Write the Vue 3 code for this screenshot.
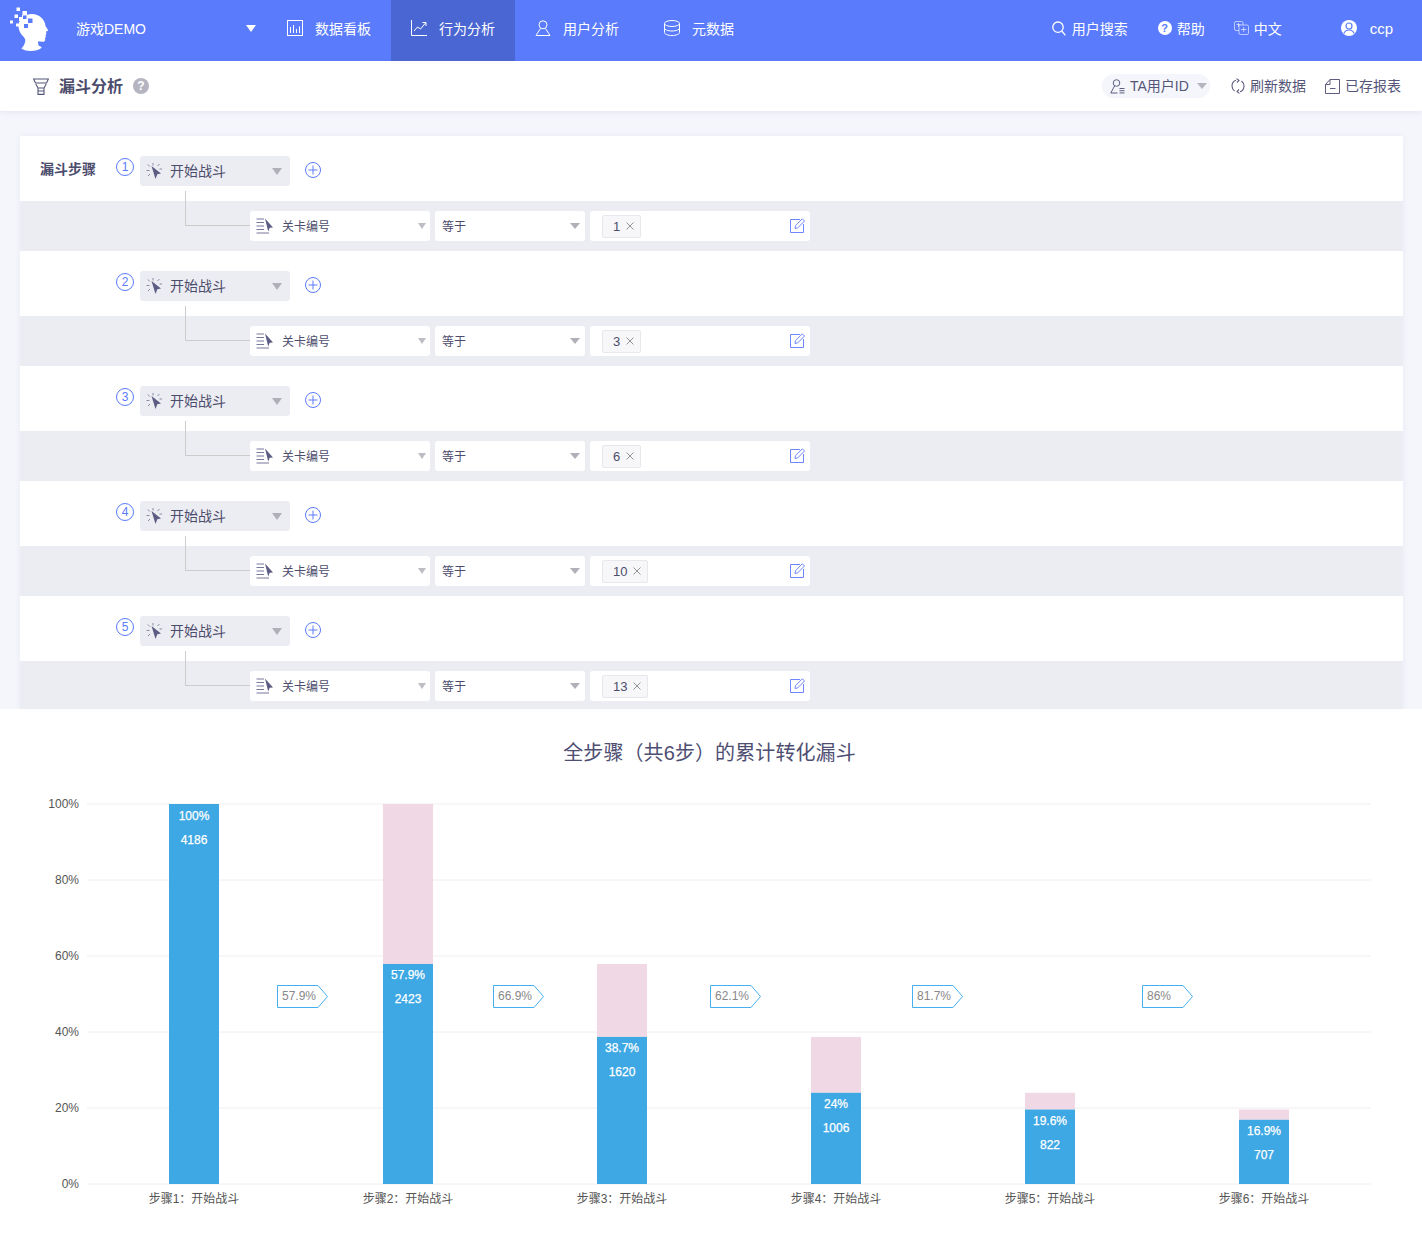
<script setup>
const levels = ['1', '3', '6', '10', '13']
const navItems = [
  { key: 'board', label: '数据看板' },
  { key: 'behavior', label: '行为分析', active: true },
  { key: 'user', label: '用户分析' },
  { key: 'meta', label: '元数据', shifted: true }
]
const ticks = [100, 80, 60, 40, 20, 0]
const top = 767
const Y = (p) => 804 - top + (100 - p) * 3.8
const bars = [
  { cx: 194, upper: 100, value: 100, pct: '100%', count: '4186' },
  { cx: 408, upper: 100, value: 57.9, pct: '57.9%', count: '2423' },
  { cx: 622, upper: 57.9, value: 38.7, pct: '38.7%', count: '1620' },
  { cx: 836, upper: 38.7, value: 24, pct: '24%', count: '1006' },
  { cx: 1050, upper: 24, value: 19.6, pct: '19.6%', count: '822' },
  { cx: 1264, upper: 19.6, value: 16.9, pct: '16.9%', count: '707' }
]
const tags = [
  { x: 277, label: '57.9%' },
  { x: 493, label: '66.9%' },
  { x: 710, label: '62.1%' },
  { x: 912, label: '81.7%' },
  { x: 1142, label: '86%' }
]
const tagY = 985 - top
const tagPoints = (x) =>
  `${x + 0.5},${tagY + 0.5} ${x + 41},${tagY + 0.5} ${x + 50.5},${tagY + 11.5} ${x + 41},${tagY + 22.5} ${x + 0.5},${tagY + 22.5}`
</script>

<template>
  <div class="page">
    <header class="nav">
      <div class="logo">
        <svg width="76" height="61" viewBox="0 0 76 61">
          <path fill="#fff" d="M32 14c7 0 13 5 13.500 12l2.500 4c.3.8-.6 1.300-2 1.500l.4 2.500-.9 1 .5 1.700-.9 1 .1 2.300c-.3 1.500-1.700 2-3.200 1.800l-4-.5.500 4.200c1.700.8 3 1.400 3.300 2.200-3 2.300-7 3.300-11 3.300-4 0-7-.8-9.500-2.500 2-2 3.500-4.500 4-7.500.1-2-.8-3.300-2.500-5-2.500-2.500-4.300-6-4.300-10C18.500 20 24 14 32 14z"/>
          <g fill="#fff">
            <rect x="16.500" y="7.500" width="3.500" height="3.500"/>
            <rect x="14.500" y="14.500" width="3.500" height="3.500"/>
            <rect x="10" y="20.500" width="3" height="3"/>
            <rect x="16" y="23.500" width="3" height="3"/>
          </g>
          <g fill="#5a7bfb">
            <rect x="22.500" y="11" width="4.500" height="4.500" fill="#fff"/>
            <rect x="19" y="17" width="4" height="4" fill="#fff"/>
            <rect x="28" y="18.500" width="4.500" height="4.500"/>
            <rect x="24" y="24" width="4" height="4"/>
            <rect x="22" y="15" width="3" height="3" fill="#fff"/>
            <rect x="20" y="21" width="4" height="4" fill="#fff"/>
            <rect x="23" y="15.500" width="3.500" height="3.500"/>
          </g>
        </svg>
      </div>
      <div class="brand">
        <span>游戏DEMO</span>
        <i class="caret caret-white"></i>
      </div>
      <a v-for="item in navItems" :key="item.key" class="nav-item" :class="{ active: item.active, shifted: item.shifted }">
        <svg class="nav-icon" viewBox="0 0 16 16" fill="none" stroke="#fff" stroke-width="1">
          <template v-if="item.key === 'board'">
            <rect x=".5" y=".5" width="15" height="15"/>
            <path d="M3.500 7v6M6.500 5v8M9.500 9v4M12.500 6.500V13"/>
          </template>
          <template v-else-if="item.key === 'behavior'">
            <path d="M.5 0v15.500H16"/>
            <path d="M3 11l3.500-4 3 2L14.500 3M11.500 2.500h3.500V6"/>
          </template>
          <template v-else-if="item.key === 'user'">
            <circle cx="8" cy="4.800" r="4"/>
            <path d="M5.500 8.500L1 15.500h14l-4.500-7"/>
          </template>
          <template v-else>
            <ellipse cx="8" cy="3.500" rx="7.500" ry="3"/>
            <path d="M.5 3.500v9c0 1.700 3.400 3 7.500 3s7.500-1.300 7.500-3v-9M.5 8c0 1.700 3.400 3 7.500 3s7.500-1.300 7.500-3"/>
          </template>
        </svg>
        <span>{{ item.label }}</span>
      </a>
      <div class="nav-right">
        <span class="tool tool-search">
          <svg width="14" height="15" viewBox="0 0 14 15" fill="none" stroke="#fff" stroke-width="1.300"><circle cx="6" cy="6.200" r="5.200"/><path d="M9.800 10l3.600 4.300"/></svg>
          <span>用户搜索</span>
        </span>
        <span class="tool tool-help">
          <span class="help-dot">?</span>
          <span>帮助</span>
        </span>
        <span class="tool tool-lang">
          <svg width="15" height="14" viewBox="0 0 15 14" fill="none" stroke="#fff" stroke-opacity=".6" stroke-width="1"><rect x=".5" y=".5" width="8.500" height="9" rx="1.500"/><rect x="5" y="4" width="9.500" height="9.500" rx="1.500" fill="#5a7bfb"/><path d="M7 8.500h5.500M9.700 6v5"/><path d="M2.500 3.500h4M4.500 2v4"/></svg>
          <span>中文</span>
        </span>
        <span class="tool tool-user">
          <svg width="16" height="16" viewBox="0 0 16 16"><circle cx="8" cy="8" r="8" fill="#fff"/><circle cx="8" cy="6" r="3" fill="none" stroke="#5a7bfb" stroke-width="1.200"/><path d="M2.800 13.500c1-2.500 3-3.500 5.200-3.500s4.200 1 5.200 3.500" fill="none" stroke="#5a7bfb" stroke-width="1.200"/></svg>
          <span class="user-name">ccp</span>
        </span>
      </div>
    </header>

    <div class="subhead">
      <svg class="funnel" width="16" height="17" viewBox="0 0 16 17" fill="none" stroke="#55557a" stroke-width="1.100">
        <path d="M.6 1h14.800L13.500 5h-11zM2.800 6l2.200 4h6l2.200-4M5 10v6.400h6V10M5 13h6"/>
      </svg>
      <h1 class="title">漏斗分析</h1>
      <span class="q-dot">?</span>
      <div class="sub-right">
        <span class="pill">
          <svg width="15" height="15" viewBox="0 0 15 15" fill="none" stroke="#5c5c7e" stroke-width="1"><circle cx="6.500" cy="4" r="3.300"/><path d="M4.500 7L.8 14h6.700M9.500 9.500h5M9.500 11.700h5M9.500 13.900h5"/></svg>
          <span class="lift">TA用户ID</span>
          <i class="caret caret-soft"></i>
        </span>
        <span class="action action-refresh">
          <svg width="14" height="16" viewBox="0 0 14 16" fill="none" stroke="#5c5c7e" stroke-width="1.100"><path d="M5 2.200C2.600 3 1 5.200 1 8c0 2 1 3.800 2.600 5M9 13.800c2.400-.8 4-3 4-5.800 0-2-1-3.800-2.600-5"/><path d="M5.500 .6L8 2.400 6 4.500M8.500 15.400L6 13.600l2-2.100"/></svg>
          <span class="lift">刷新数据</span>
        </span>
        <span class="action">
          <svg width="15" height="15" viewBox="0 0 15 15" fill="none" stroke="#5c5c7e" stroke-width="1"><path d="M.5 14.500V5.500L5 .5h9.500v14zM.5 5.500H5V.5M5 9.500h5.500"/></svg>
          <span class="lift">已存报表</span>
        </span>
      </div>
    </div>

    <main class="main">
      <section class="card">
        <div v-for="(level, i) in levels" :key="i" class="step">
          <div class="step-row">
            <span class="step-label">{{ i === 0 ? '漏斗步骤' : '' }}</span>
            <span class="step-num">{{ i + 1 }}</span>
            <div class="select event-select">
              <svg width="17" height="17" viewBox="0 0 17 17" fill="none" stroke="#8a8aa6" stroke-width="1">
                <path d="M7 0v2.500M1.800 1.500L3.800 3.500M.5 7.500h3M2 13l2-2M13.500 1l-2 2M16 6h-2.500"/>
                <path d="M5.500 3L15 10.500l-3.700.7L9.500 16z" fill="#5c5c84" stroke="none"/>
              </svg>
              <span class="event-text lift">开始战斗</span>
              <i class="caret caret-big"></i>
            </div>
            <svg class="plus" width="16" height="16" viewBox="0 0 16 16" fill="none" stroke="#5a7bfb" stroke-width="1"><circle cx="8" cy="8" r="7.500"/><path d="M3.500 8h9M8 3.500v9"/></svg>
          </div>
          <div class="filter-row">
            <div class="select field">
              <svg width="17" height="17" viewBox="0 0 17 17" fill="none" stroke="#77779a" stroke-width="1">
                <path d="M.5 1h7.500M.5 4.500h7.500M.5 8h7.500M.5 11.500h7.500M.5 15h12.500"/>
                <path d="M9 .5L17 9.500l-3.300.3-1.500 3.700z" fill="#5c5c84" stroke="none"/>
              </svg>
              <span class="field-text lift">关卡编号</span>
              <i class="caret caret-small"></i>
            </div>
            <div class="select op">
              <span class="op-text lift">等于</span>
              <i class="caret caret-op"></i>
            </div>
            <div class="select value">
              <span class="tag">
                <span>{{ level }}</span>
                <svg width="8" height="8" viewBox="0 0 8 8" fill="none" stroke="#888" stroke-width=".9"><path d="M.5.500l7 7M7.500.500l-7 7"/></svg>
              </span>
              <svg class="edit" width="15" height="15" viewBox="0 0 15 15" fill="none" stroke="#6f86ff" stroke-width="1"><path d="M10 1.500H.5v13h13V6"/><path d="M5 10.500l.5-2.800L12.300.8l2.200 2.200-6.800 6.900z"/></svg>
            </div>
          </div>
          <span class="connector"></span>
        </div>
      </section>
    </main>

    <section class="chart">
      <h2 class="chart-title">全步骤（共6步）的累计转化漏斗</h2>
      <svg class="plot" width="1422" height="475" viewBox="0 0 1422 475">
        <g v-for="t in ticks" :key="t">
          <line x1="87" x2="1371" :y1="Y(t)" :y2="Y(t)" stroke="#eeeeee" stroke-width="1"/>
          <text class="axis" x="79" :y="Y(t) + 4.300" text-anchor="end">{{ t }}%</text>
        </g>
        <g v-for="(b, i) in bars" :key="i">
          <rect v-if="b.upper > b.value" :x="b.cx - 25" :y="Y(b.upper)" width="50" :height="(b.upper - b.value) * 3.800" fill="#f0d8e4"/>
          <rect :x="b.cx - 25" :y="Y(b.value)" width="50" :height="b.value * 3.800" fill="#3ea8e4"/>
          <text class="bar-text" :x="b.cx" :y="Y(b.value) + 15.500" text-anchor="middle">{{ b.pct }}</text>
          <text class="bar-text" :x="b.cx" :y="Y(b.value) + 39.500" text-anchor="middle">{{ b.count }}</text>
          <text class="step-name" :x="b.cx" y="435.500" text-anchor="middle">步骤{{ i + 1 }}：开始战斗</text>
        </g>
        <g v-for="t in tags" :key="t.x">
          <polygon :points="tagPoints(t.x)" fill="#fff" stroke="#45b0f0" stroke-width="1"/>
          <text class="tag-text" :x="t.x + 5" :y="tagY + 15">{{ t.label }}</text>
        </g>
      </svg>
    </section>
  </div>
</template>

<style>
html, body { margin: 0; padding: 0; background: #fff; }
</style>

<style scoped>
.page {
  width: 1422px;
  height: 1242px;
  overflow: hidden;
  font-family: "Liberation Sans", "Noto Sans CJK SC", sans-serif;
  color: #4c4c6c;
  background: #fff;
}
.nav {
  height: 61px;
  display: flex;
  align-items: stretch;
  background: #5a7bfb;
  color: #fff;
  font-size: 14px;
}
.logo { width: 76px; flex: none; }
.logo svg { display: block; }
.brand {
  width: 191px;
  flex: none;
  box-sizing: border-box;
  padding: 0 11px 5px 0;
  display: flex;
  align-items: center;
  justify-content: space-between;
}
.caret {
  display: block;
  width: 0;
  height: 0;
  border-style: solid;
  border-color: transparent;
  border-bottom-width: 0;
}
.caret-white { border-width: 7px 5.500px 0; border-top-color: #fff; }
.caret-soft { border-width: 6px 5px 0; border-top-color: #b5b5c0; margin-left: 8px; }
.caret-big { border-width: 7px 5px 0; border-top-color: #b0b0b8; margin-left: auto; }
.caret-small { border-width: 6px 4.500px 0; border-top-color: #bdbdc4; margin-left: auto; }
.caret-op { border-width: 6px 5px 0; border-top-color: #b0b0b8; margin-left: auto; }
.lift { margin-top: -2px; }
.nav-item {
  box-sizing: border-box;
  display: flex;
  align-items: center;
  gap: 12px;
  padding: 0 20px 5px;
}
.nav-item.active { background: #4a66d2; }
.nav-item.shifted { margin-left: 5px; }
.nav-icon { width: 16px; height: 16px; flex: none; }
.nav-right {
  margin-left: auto;
  padding: 0 29px 5px 0;
  display: flex;
  align-items: center;
}
.tool { display: flex; align-items: center; gap: 5px; }
.tool-search { gap: 6px; }
.tool-help { margin-left: 30px; }
.tool-lang { margin-left: 29px; }
.tool-user { margin-left: 59px; gap: 13px; }
.help-dot {
  width: 14px;
  height: 14px;
  border-radius: 50%;
  background: #fff;
  color: #5a7bfb;
  font-size: 11px;
  font-weight: 700;
  line-height: 14px;
  text-align: center;
}
.user-name { font-size: 15px; }
.subhead {
  position: relative;
  height: 50px;
  box-sizing: border-box;
  padding-left: 33px;
  display: flex;
  align-items: center;
  background: #fff;
  box-shadow: 0 1px 5px rgba(90, 100, 160, .12);
}
.funnel { flex: none; }
.title {
  margin: -2px 0 0 10px;
  font-size: 16px;
  font-weight: 700;
  color: #4c4c6c;
}
.q-dot {
  margin-left: 10px;
  width: 16px;
  height: 16px;
  border-radius: 50%;
  background: #b5b5c2;
  color: #fff;
  font-size: 12px;
  font-weight: 700;
  line-height: 16px;
  text-align: center;
}
.sub-right {
  margin-left: auto;
  padding-right: 21px;
  display: flex;
  align-items: center;
  font-size: 14px;
  color: #55557a;
}
.pill {
  width: 108px;
  height: 24px;
  box-sizing: border-box;
  padding-left: 8px;
  display: flex;
  align-items: center;
  gap: 5px;
  border-radius: 12px;
  background: #f5f6fb;
}
.pill .caret { margin-left: 3px; }
.action { display: flex; align-items: center; gap: 5px; margin-left: 19px; }
.action-refresh { margin-left: 21px; }
.main {
  height: 598px;
  box-sizing: border-box;
  padding: 25px 19px 0 20px;
  background: #f5f6fb;
}
.card {
  height: 573px;
  overflow: hidden;
  background: #fff;
  box-shadow: 0 0 6px rgba(90, 100, 160, .08);
}
.step { position: relative; height: 115px; }
.step-row {
  height: 65px;
  box-sizing: border-box;
  padding: 20px 0 0 20px;
  display: flex;
  align-items: flex-start;
}
.step-label {
  width: 76px;
  flex: none;
  height: 26px;
  line-height: 26px;
  font-size: 14px;
  font-weight: 700;
  color: #4c4c6c;
}
.step-num {
  width: 18px;
  height: 18px;
  flex: none;
  margin: 2px 6px 0 0;
  box-sizing: border-box;
  border: 1px solid #5a7bfb;
  border-radius: 50%;
  color: #5a7bfb;
  font-size: 12px;
  line-height: 16px;
  text-align: center;
}
.select {
  height: 30px;
  box-sizing: border-box;
  display: flex;
  align-items: center;
  border-radius: 3px;
  background: #fff;
}
.event-select {
  width: 150px;
  padding: 0 8px 0 6px;
  background: #ecedf2;
}
.event-text { margin-left: 7px; font-size: 14px; }
.plus { margin: 6px 0 0 15px; flex: none; }
.filter-row {
  height: 50px;
  box-sizing: border-box;
  padding: 10px 0 0 230px;
  display: flex;
  gap: 5px;
  background: #ecedf2;
}
.field { width: 180px; padding: 0 4px 0 6px; }
.field-text { margin-left: 9px; font-size: 12px; }
.op { width: 150px; padding: 0 5px 0 7px; }
.op-text { font-size: 12px; }
.value { width: 220px; padding: 0 5px 0 12px; }
.tag {
  height: 23px;
  box-sizing: border-box;
  display: flex;
  align-items: center;
  gap: 6px;
  padding: 0 6px 0 10px;
  border: 1px solid #e8e8ec;
  border-radius: 2px;
  background: #f7f7f9;
  font-size: 13px;
}
.edit { margin: -2px 0 0 auto; }
.connector {
  position: absolute;
  left: 165px;
  top: 55px;
  width: 65px;
  height: 35px;
  box-sizing: border-box;
  border-left: 1px solid #cccccc;
  border-bottom: 1px solid #cccccc;
}
.chart { background: #fff; }
.chart-title {
  margin: 0;
  padding: 30px 3px 0 0;
  height: 28px;
  line-height: 28px;
  font-size: 20px;
  font-weight: 400;
  letter-spacing: .1px;
  text-align: center;
  color: #4e4e72;
  box-sizing: content-box;
}
.plot { display: block; }
.axis { font-size: 12px; fill: #555; }
.bar-text { font-size: 12px; fill: #fff; stroke: #fff; stroke-width: .25px; }
.step-name { font-size: 12px; fill: #555; }
.tag-text { font-size: 12px; fill: #888; }
</style>
